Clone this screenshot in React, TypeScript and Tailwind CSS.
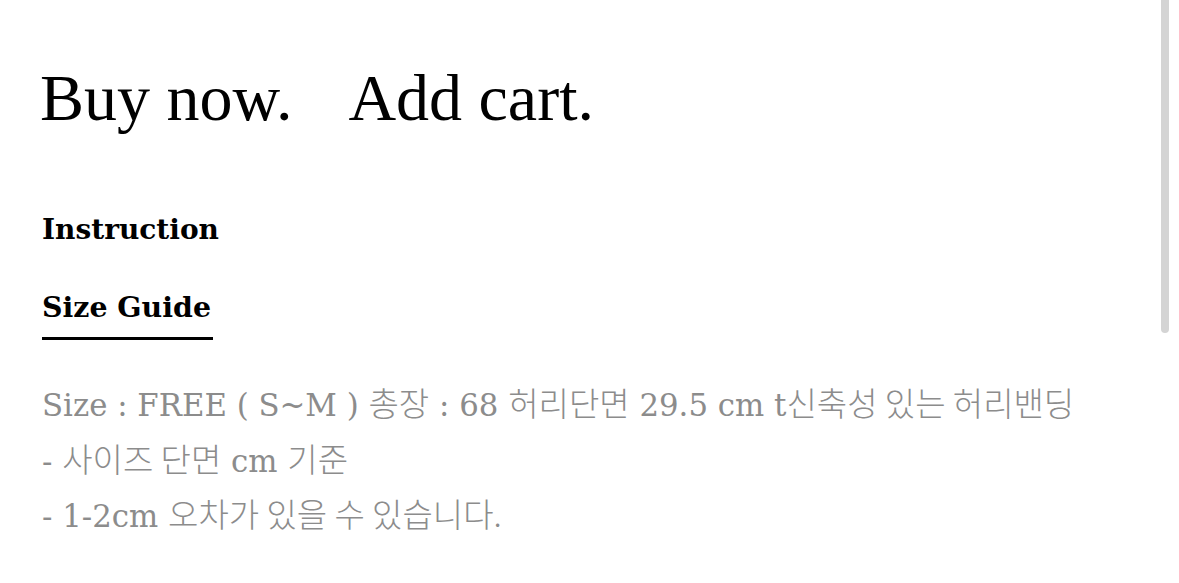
const ko = "font-['Noto_Sans_CJK_KR',sans-serif] font-light text-[33px] leading-none";

export default function App() {
  return (
    <div className="relative h-[583px] w-[1179px] overflow-hidden bg-white">
      {/* overlay scrollbar thumb */}
      <div className="absolute right-[10px] top-0 h-[333px] w-[8px] rounded-b-full bg-[#d4d4d4]" />

      <div className="pl-[40px] pt-[62px]">
        <div className="flex items-baseline gap-[56px] font-['Liberation_Serif',serif] text-[66px] leading-[72px] text-black">
          <span>Buy now.</span>
          <span>Add cart.</span>
        </div>

        <div className="mt-[76px] pl-[2px] font-['DejaVu_Serif',serif] text-black">
          <p className="text-[28px] font-bold leading-[40px]">Instruction</p>
          <div className="mt-[37px] inline-block border-b-[3px] border-black pb-[10px] pr-[2px]">
            <p className="text-[28.4px] font-bold leading-[40px]">Size Guide</p>
          </div>
        </div>

        <div className="mt-[38px] pl-[2px] font-['DejaVu_Serif',serif] text-[30.8px] leading-[55.5px] text-[#8c8c8c]">
          <p>
            Size : FREE ( S~M ) <span className={ko}>총장</span> : 68 <span className={ko}>허리단면</span> 29.5 cm t
            <span className={ko}>신축성 있는 허리밴딩</span>
          </p>
          <p>
            - <span className={ko}>사이즈 단면</span> cm <span className={ko}>기준</span>
          </p>
          <p>
            - 1-2cm <span className={ko}>오차가 있을 수 있습니다.</span>
          </p>
        </div>
      </div>
    </div>
  );
}
